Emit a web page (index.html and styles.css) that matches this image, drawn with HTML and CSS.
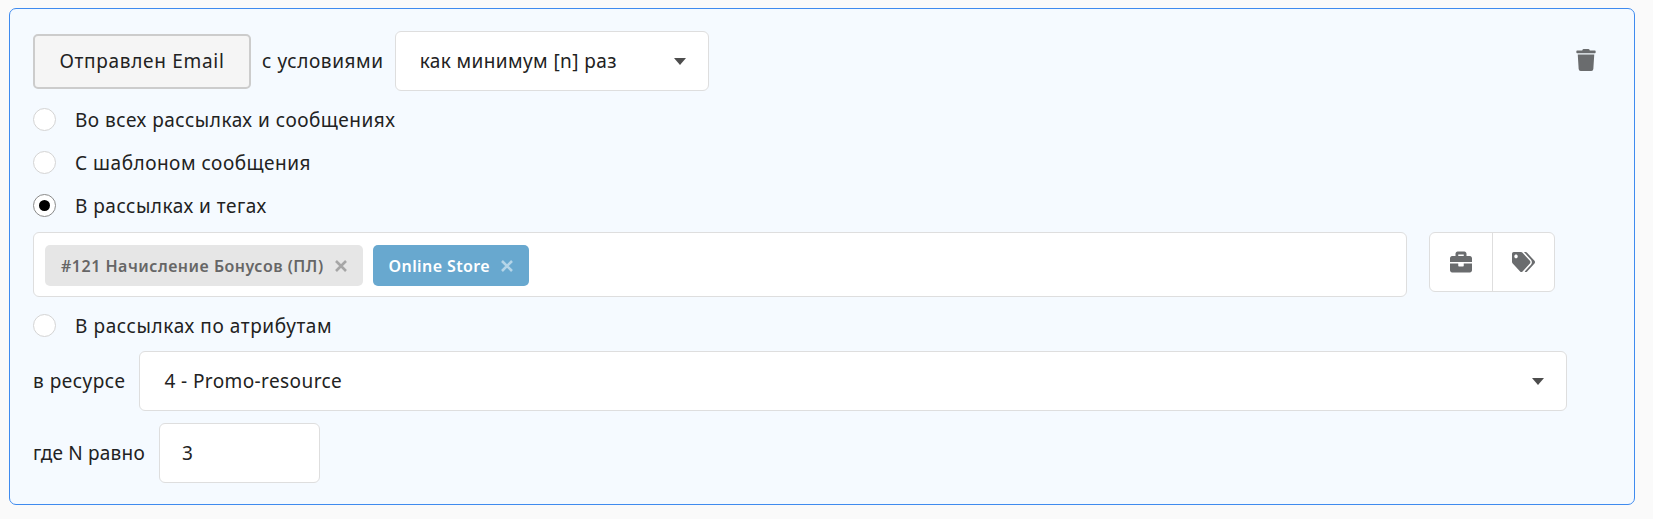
FILE: index.html
```html
<!DOCTYPE html>
<html lang="ru">
<head>
<meta charset="utf-8">
<title>Условие</title>
<link rel="stylesheet" href="styles.css">
</head>
<body>
<div class="panel">
  <div class="row-top">
    <button class="btn-event">Отправлен Email</button>
    <span class="label label-cond">с условиями</span>
    <div class="select select-freq"><span>как минимум [n] раз</span><i class="caret"></i></div>
    <svg class="trash" viewBox="0 0 448 512"><path d="M432 32H312l-9.4-18.7A24 24 0 0 0 281.1 0H166.8a23.72 23.72 0 0 0-21.4 13.3L136 32H16A16 16 0 0 0 0 48v32a16 16 0 0 0 16 16h416a16 16 0 0 0 16-16V48a16 16 0 0 0-16-16zM53.2 467a48 48 0 0 0 47.9 45h245.8a48 48 0 0 0 47.9-45L416 128H32z"/></svg>
  </div>
  <div class="radio-row first"><i class="radio"></i><span>Во всех рассылках и сообщениях</span></div>
  <div class="radio-row"><i class="radio"></i><span>С шаблоном сообщения</span></div>
  <div class="radio-row"><i class="radio checked"></i><span>В рассылках и тегах</span></div>
  <div class="tag-row">
    <div class="tag-box">
      <span class="chip chip-grey">#121 Начисление Бонусов (ПЛ)<svg class="x" viewBox="0 0 12 12"><path d="M1 1l10 10M11 1L1 11"/></svg></span>
      <span class="chip chip-blue">Online Store<svg class="x" viewBox="0 0 12 12"><path d="M1 1l10 10M11 1L1 11"/></svg></span>
    </div>
    <div class="btn-group">
      <div class="group-btn"><svg class="ico-case" viewBox="0 0 512 512" preserveAspectRatio="none"><path d="M320 336c0 8.84-7.16 16-16 16h-96c-8.84 0-16-7.16-16-16v-48H0v144c0 25.6 22.4 48 48 48h416c25.6 0 48-22.4 48-48V288H320v48zm144-208h-80V80c0-25.6-22.4-48-48-48H176c-25.6 0-48 22.4-48 48v48H48c-25.6 0-48 22.4-48 48v80h512v-80c0-25.6-22.4-48-48-48zm-144 0H192V96h128v32z"/></svg></div>
      <div class="group-btn"><svg class="ico-tags" viewBox="0 0 640 512" preserveAspectRatio="none"><path d="M497.941 225.941L286.059 14.059A48 48 0 0 0 252.118 0H48C21.49 0 0 21.49 0 48v204.118a48 48 0 0 0 14.059 33.941l211.882 211.882c18.744 18.745 49.136 18.746 67.882 0l204.118-204.118c18.745-18.745 18.745-49.137 0-67.882zM112 160c-26.51 0-48-21.49-48-48s21.49-48 48-48 48 21.49 48 48-21.49 48-48 48zm513.941 133.823L421.823 497.941c-18.745 18.745-49.137 18.745-67.882 0l-.36-.36L527.64 323.522c16.999-16.999 26.36-39.6 26.36-63.64s-9.362-46.641-26.36-63.64L331.397 0h48.721a48 48 0 0 1 33.941 14.059l211.882 211.882c18.745 18.745 18.745 49.137 0 67.882z"/></svg></div>
    </div>
  </div>
  <div class="radio-row attr"><i class="radio"></i><span>В рассылках по атрибутам</span></div>
  <div class="field-row resource">
    <span class="label">в ресурсе</span>
    <div class="select select-res"><span>4 - Promo-resource</span><i class="caret"></i></div>
  </div>
  <div class="field-row number">
    <span class="label label-n">где N равно</span>
    <div class="num-input">3</div>
  </div>
</div>
</body>
</html>
```
FILE: styles.css
```css
* { box-sizing: border-box; }
html, body { margin: 0; }
body {
  height: 519px;
  padding: 8px 18px 0 9px;
  background: #fafafa;
  font-family: "Noto Sans", "Open Sans", sans-serif;
  font-size: 19px;
  letter-spacing: 0.5px;
  color: #222;
  overflow: hidden;
}
.panel {
  height: 497px;
  padding: 22px 67px 0 23px;
  background: #f5faff;
  border: 1px solid #3f8bef;
  border-radius: 7px;
}
.row-top { display: flex; align-items: center; height: 60px; }
.btn-event {
  width: 218px;
  height: 55px;
  padding: 0;
  font: inherit;
  letter-spacing: 0.7px;
  color: inherit;
  background: #f5f5f5;
  border: 2px solid #ccc;
  border-radius: 5px;
}
.label { white-space: nowrap; }
.label-cond { flex: none; margin: 0 11px; letter-spacing: 0.6px; }
.label-n { letter-spacing: 0.2px; }
.select {
  display: flex;
  align-items: center;
  justify-content: space-between;
  height: 60px;
  background: #fff;
  border: 1px solid #dedede;
  border-radius: 6px;
  padding: 0 22px 0 24px;
  letter-spacing: 0.4px;
}
.select-freq { width: 314px; }
.select-res { flex: 1; }
.caret {
  width: 0;
  height: 0;
  border-left: 6px solid transparent;
  border-right: 6px solid transparent;
  border-top: 7px solid #4d4d4d;
}
.trash { width: 20px; height: 22px; margin: 0 -29px 2px auto; fill: #6a6c6e; }
.radio-row { display: flex; align-items: center; height: 23px; margin-top: 20px; }
.radio-row.first { margin-top: 17px; }
.radio-row.attr { margin-top: 17px; letter-spacing: 0.6px; }
.radio {
  position: relative;
  width: 23px;
  height: 23px;
  margin-right: 19px;
  background: #fff;
  border: 1px solid #d4d4d4;
  border-radius: 50%;
}
.radio.checked { border-color: #8a8a8a; }
.radio.checked::after {
  content: "";
  position: absolute;
  inset: 5px;
  background: #000;
  border-radius: 50%;
}
.tag-row { display: flex; align-items: flex-start; margin: 15px 12px 0 0; }
.tag-box {
  flex: 1;
  display: flex;
  gap: 10px;
  align-items: center;
  height: 65px;
  padding: 2px 11px 0;
  background: #fff;
  border: 1px solid #dedede;
  border-radius: 6px;
}
.chip {
  display: flex;
  align-items: center;
  height: 41px;
  padding: 0 16px;
  border-radius: 5px;
  font-size: 16px;
  font-weight: 600;
  letter-spacing: 0.5px;
}
.chip-grey { background: #e6e6e6; color: #666; }
.chip-blue { background: #68a8cf; color: #fff; letter-spacing: 0.4px; }
.x { width: 12px; height: 12px; margin-left: 11px; fill: none; stroke-width: 2.6; }
.chip-grey .x { stroke: #a6a6a6; }
.chip-blue .x { stroke: #b5d5e8; }
.btn-group {
  display: flex;
  width: 126px;
  height: 60px;
  margin-left: 22px;
  background: #fff;
  border: 1px solid #dedede;
  border-radius: 6px;
}
.group-btn { flex: 1; display: flex; align-items: center; justify-content: center; }
.group-btn + .group-btn { border-left: 1px solid #dedede; }
.group-btn svg { fill: #6a6c6e; }
.ico-case { width: 22px; height: 24px; }
.ico-tags { width: 23px; height: 20px; }
.field-row { display: flex; align-items: center; }
.resource { margin-top: 14px; gap: 14px; }
.number { margin-top: 12px; gap: 14px; }
.num-input {
  display: flex;
  align-items: center;
  width: 161px;
  height: 60px;
  padding: 0 22px;
  background: #fff;
  border: 1px solid #dedede;
  border-radius: 6px;
}
```
